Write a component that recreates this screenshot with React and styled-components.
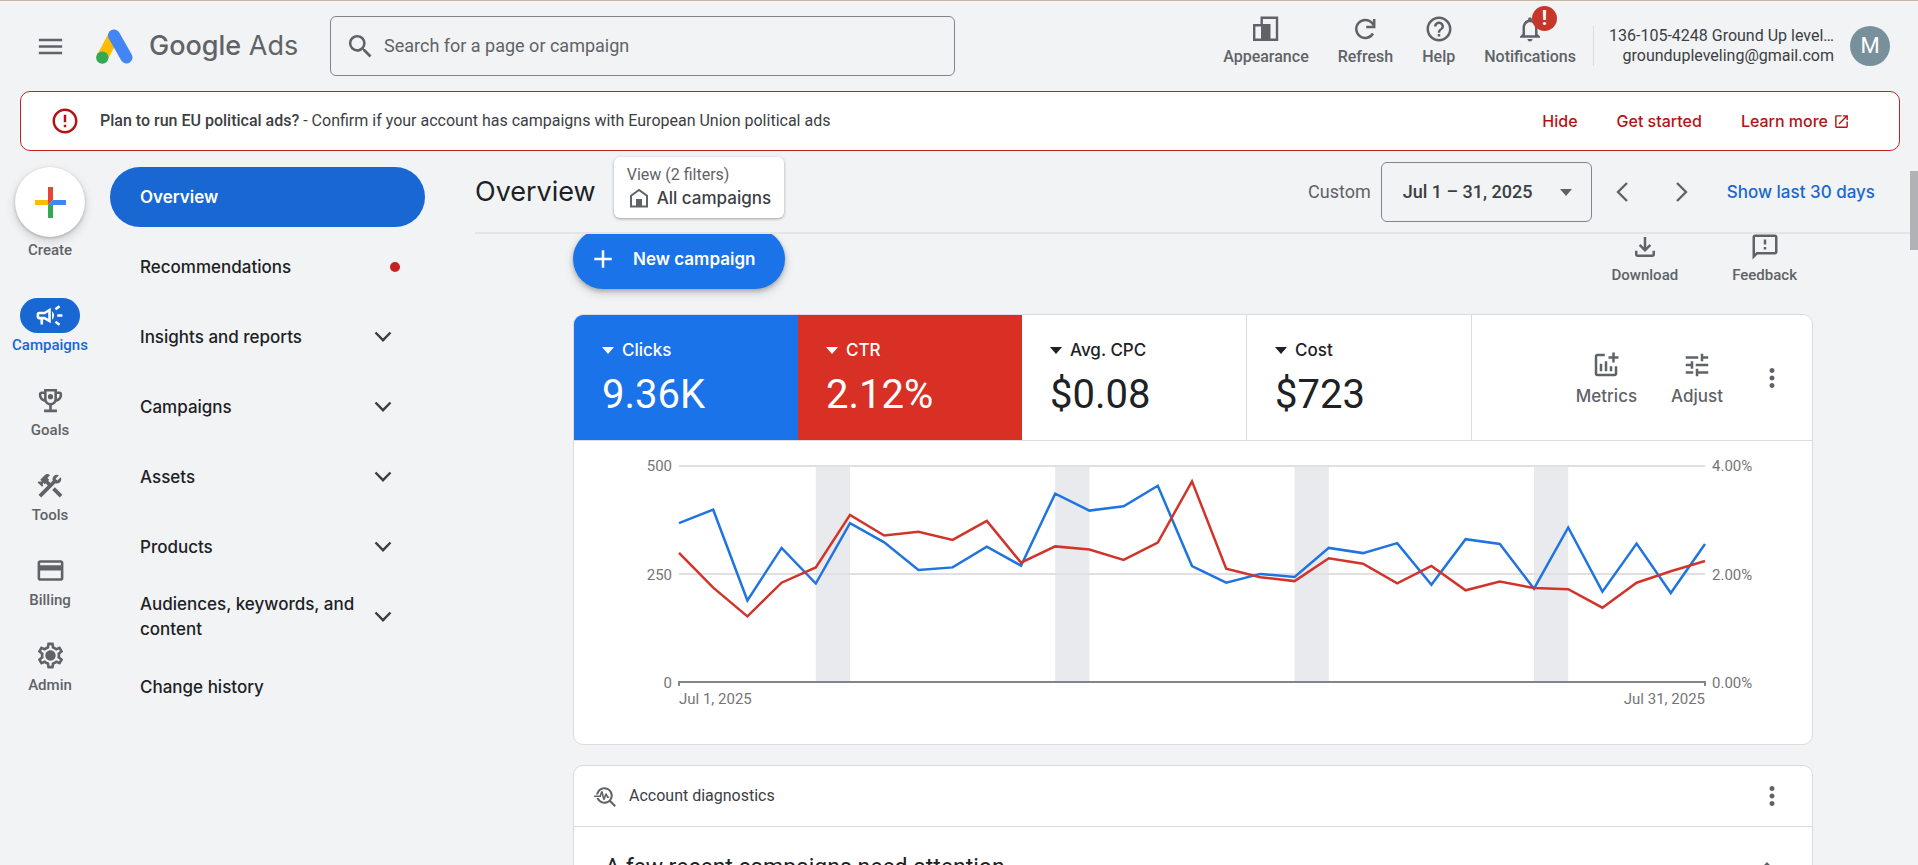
import React from "react";
import styled, { createGlobalStyle, css } from "styled-components";
import {
  MdMenu, MdSearch, MdHelpOutline, MdNotificationsNone, MdErrorOutline,
  MdOutlineCampaign, MdConstruction, MdCreditCard, MdOutlineSettings, MdOutlineEmojiEvents,
  MdTune, MdMoreVert, MdOutlineFileDownload, MdOutlineFeedback, MdOpenInNew,
  MdOutlineAddchart, MdOutlineTroubleshoot, MdAdd,
} from "react-icons/md";

const display = '"Inter", "Liberation Sans", sans-serif';
const body = '"Roboto", "Liberation Sans", sans-serif';

const color = {
  page: "#f1f3f4",
  ink: "#202124",
  text: "#3c4043",
  muted: "#5f6368",
  axis: "#80868b",
  line: "#dadce0",
  blue: "#1967d2",
  brightBlue: "#1a73e8",
  red: "#d93025",
  darkRed: "#b31412",
};

const Global = createGlobalStyle`
  *, *::before, *::after { box-sizing: border-box; }
  html, body { margin: 0; background: ${color.page}; }
  body { font-family: ${body}; color: ${color.ink}; font-size: 15px; line-height: 20px; }
  button, input, select { font: inherit; color: inherit; }
  button { border: 0; background: none; padding: 0; cursor: pointer; }
  a { color: inherit; text-decoration: none; }
  svg { display: block; flex: none; }
`;

const Page = styled.div`
  height: 100vh;
  display: flex;
  flex-direction: column;
  overflow: hidden;
  border-top: 1px solid #c9b4a8;
`;

/* ---------- top bar ---------- */

const TopBar = styled.header`
  height: 90px;
  flex: none;
  display: flex;
  align-items: center;
  padding: 0 28px 0 35px;
  color: ${color.muted};
`;

const Brand = styled.a`
  display: flex;
  align-items: center;
  gap: 16px;
  margin-left: 30px;
  font-family: ${display};
  font-size: 27px;
  line-height: 36px;
  width: 203px;
  white-space: nowrap;
`;

const BrandName = styled.span`
  b { font-weight: 500; }
`;

const SearchBox = styled.label`
  flex: 0 1 625px;
  height: 60px;
  margin-left: 31px;
  display: flex;
  align-items: center;
  gap: 8px;
  padding: 0 14px;
  border: 1px solid ${color.axis};
  border-radius: 6px;
`;

const SearchInput = styled.input`
  flex: 1;
  min-width: 0;
  border: 0;
  outline: 0;
  background: none;
  font-size: 18px;
  line-height: 24px;
  padding: 0;
  &::placeholder { color: ${color.muted}; opacity: 1; }
`;

const TopActions = styled.nav`
  margin-left: auto;
  margin-bottom: 12px;
  display: flex;
  gap: 29px;
`;

const StackButton = styled.button`
  position: relative;
  display: flex;
  flex-direction: column;
  align-items: center;
  gap: 3px;
  color: ${color.muted};
  font-weight: 500;
  font-size: 15px;
  line-height: 20px;
  ${(p) => p.$size === "top" && css`font-size: 16px;`}
  ${(p) => p.$size === "card" && css`font-size: 17px; font-family: ${display}; gap: 6px;`}
`;

const AlertBadge = styled.span`
  position: absolute;
  top: -8px;
  right: 19px;
  width: 25px;
  height: 25px;
  border-radius: 50%;
  background: #c5372a;
  color: #fff;
  font-size: 20px;
  font-weight: 700;
  line-height: 25px;
  text-align: center;
`;

const Account = styled.button`
  display: flex;
  align-items: center;
  gap: 16px;
  height: 40px;
  margin-left: 17px;
  padding-left: 15px;
  border-left: 1px solid ${color.line};
  color: ${color.text};
  font-size: 16px;
  text-align: right;
  white-space: nowrap;
`;

const Avatar = styled.span`
  width: 40px;
  height: 40px;
  border-radius: 50%;
  background: #78909c;
  color: #fff;
  font-size: 22px;
  line-height: 40px;
  text-align: center;
`;

/* ---------- banner ---------- */

const Banner = styled.section`
  flex: none;
  height: 60px;
  margin: 0 18px 0 20px;
  padding: 0 49px 0 29px;
  display: flex;
  align-items: center;
  background: #fff;
  border: 1px solid #c5221f;
  border-radius: 10px;
  color: ${color.darkRed};
`;

const BannerText = styled.p`
  margin: 0 auto 0 20px;
  font-size: 16px;
  color: ${color.text};
  b { font-weight: 500; }
`;

const BannerLinks = styled.div`
  display: flex;
  gap: 39px;
  font-family: ${display};
  font-size: 16px;
  font-weight: 500;
  a { display: flex; align-items: center; gap: 5px; }
`;

/* ---------- navigation ---------- */

const Body = styled.div`
  flex: 1;
  min-height: 0;
  display: flex;
`;

const Rail = styled.nav`
  flex: none;
  width: 100px;
  padding-top: 16px;
  display: flex;
  flex-direction: column;
  align-items: center;
`;

const CreateButton = styled.button`
  display: flex;
  flex-direction: column;
  align-items: center;
  gap: 3px;
  margin-bottom: 38px;
  color: ${color.muted};
  font-weight: 500;
`;

const CreateDisc = styled.span`
  width: 70px;
  height: 70px;
  border-radius: 50%;
  display: grid;
  place-items: center;
  background: #fff;
  box-shadow: 0 1px 3px rgba(60, 64, 67, 0.3), 0 4px 10px rgba(60, 64, 67, 0.2);
`;

const RailLink = styled.a`
  display: flex;
  flex-direction: column;
  align-items: center;
  gap: 2px;
  height: 85px;
  font-weight: 500;
  color: ${(p) => (p.$active ? color.blue : color.muted)};
`;

const RailPill = styled.span`
  width: 60px;
  height: 35px;
  border-radius: 18px;
  display: grid;
  place-items: center;
  ${(p) => p.$active && css`background: ${color.blue}; color: #fff;`}
`;

const Menu = styled.nav`
  flex: none;
  width: 335px;
  padding: 16px 10px 0;
  display: flex;
  flex-direction: column;
  gap: 10px;
`;

const MenuLink = styled.a`
  height: 60px;
  border-radius: 30px;
  padding: 0 33px 0 30px;
  display: flex;
  align-items: center;
  justify-content: space-between;
  font-family: ${display};
  font-size: 17px;
  font-weight: 500;
  line-height: 25px;
  svg { color: ${color.text}; }
  ${(p) => p.$active && css`background: ${color.blue}; color: #fff; font-weight: 600;`}
`;

const Dot = styled.span`
  width: 10px;
  height: 10px;
  margin-right: -8px;
  border-radius: 50%;
  background: #c5221f;
`;

/* ---------- main column ---------- */

const Main = styled.main`
  flex: 1;
  min-width: 0;
  margin-left: 40px;
  display: flex;
  flex-direction: column;
`;

const PageHead = styled.div`
  flex: none;
  height: 83px;
  display: flex;
  align-items: center;
  padding: 1px 35px 0 0;
  border-bottom: 2px solid #e3e5e8;
`;

const Title = styled.h1`
  margin: 0 18px 0 0;
  font-family: ${display};
  font-size: 27px;
  font-weight: 400;
  line-height: 36px;
`;

const ScopeChip = styled.button`
  display: flex;
  flex-direction: column;
  justify-content: center;
  gap: 1px;
  height: 61px;
  margin-bottom: 10px;
  padding: 0 13px;
  border-radius: 6px;
  background: #fff;
  color: ${color.muted};
  font-size: 16px;
  box-shadow: 0 1px 3px rgba(60, 64, 67, 0.45);
  text-align: left;
`;

const ScopeName = styled.span`
  display: flex;
  align-items: center;
  gap: 8px;
  font-family: ${display};
  font-size: 17px;
  font-weight: 500;
  line-height: 24px;
  color: ${color.text};
  padding-left: 2px;
  svg { color: ${color.muted}; }
`;

const RangeControls = styled.div`
  margin-left: auto;
  display: flex;
  align-items: center;
  font-size: 18px;
`;

const RangeLabel = styled.label`
  color: ${color.muted};
  margin-right: 10px;
`;

const RangeField = styled.span`
  display: flex;
  align-items: center;
  width: 211px;
  height: 60px;
  padding-right: 18px;
  border: 1px solid ${color.axis};
  border-radius: 6px;
  color: ${color.muted};
`;

const RangeSelect = styled.select`
  flex: 1;
  min-width: 0;
  height: 58px;
  padding: 0 0 0 21px;
  appearance: none;
  border: 0;
  background: none;
  font-weight: 500;
  color: ${color.text};
`;

const StepButton = styled.button`
  width: 60px;
  height: 60px;
  display: grid;
  place-items: center;
  color: ${color.muted};
`;

const TextLink = styled.a`
  margin-left: 15px;
  font-family: ${display};
  font-size: 17px;
  font-weight: 500;
  color: ${color.blue};
`;

const ScrollArea = styled.div`
  flex: 1;
  min-height: 0;
  overflow: hidden;
`;

const Content = styled.div`
  margin-top: -5px;
  padding: 0 97px 0 98px;
`;

const ActionRow = styled.div`
  height: 85px;
  display: flex;
  align-items: flex-start;
  padding-right: 16px;
`;

const NewCampaign = styled.button`
  height: 60px;
  padding: 0 30px 0 15px;
  display: flex;
  align-items: center;
  gap: 15px;
  border-radius: 30px;
  background: ${color.brightBlue};
  color: #fff;
  font-family: ${display};
  font-size: 17px;
  font-weight: 600;
  box-shadow: 0 2px 4px rgba(60, 64, 67, 0.3), 0 4px 10px rgba(60, 64, 67, 0.2);
`;

const ReportActions = styled.div`
  margin-left: auto;
  padding-top: 3px;
  display: flex;
  gap: 54px;
`;

const Card = styled.section`
  background: #fff;
  border: 1px solid ${color.line};
  border-radius: 10px;
  overflow: hidden;
  margin-bottom: 20px;
`;

const ScoreRow = styled.div`
  display: flex;
  height: 126px;
  border-bottom: 1px solid ${color.line};
`;

const ScoreTile = styled.button`
  width: ${(p) => (p.$fill ? 224 : 225)}px;
  padding: 23px 0 0 28px;
  display: flex;
  flex-direction: column;
  gap: 9px;
  text-align: left;
  background: ${(p) => p.$fill || "#fff"};
  color: ${(p) => (p.$fill ? "#fff" : color.ink)};
  border-right: ${(p) => (p.$fill ? "0" : `1px solid ${color.line}`)};
`;

const ScoreName = styled.span`
  display: flex;
  align-items: center;
  gap: 8px;
  font-family: ${display};
  font-size: 17px;
  font-weight: 500;
  line-height: 24px;
`;

const ScoreValue = styled.span`
  font-size: 40px;
  line-height: 48px;
`;

const ScoreTools = styled.div`
  margin-left: auto;
  padding-right: 25px;
  display: flex;
  align-items: center;
  gap: 34px;
`;

const ChartBox = styled.div`
  display: grid;
  grid-template-columns: 105px 1fr 100px;
  padding: 15px 7px 35px 0;
  color: #757575;
`;

const Axis = styled.div`
  height: 237px;
  display: flex;
  flex-direction: column;
  justify-content: space-between;
  padding: 0 7px;
  text-align: ${(p) => p.$align};
`;

const Plot = styled.svg`
  width: 100%;
  height: 219px;
  margin-top: 9px;
  overflow: visible;
`;

const DateRow = styled.div`
  grid-column: 2;
  display: flex;
  justify-content: space-between;
  margin-top: -4px;
`;

const CardHead = styled.header`
  height: 61px;
  display: flex;
  align-items: center;
  gap: 11px;
  padding: 0 25px 0 19px;
  border-bottom: 1px solid ${color.line};
  color: ${color.muted};
`;

const CardLabel = styled.h2`
  margin: 0 auto 0 0;
  font-size: 16px;
  font-weight: 400;
  color: ${color.text};
`;

const CardTopic = styled.div`
  display: flex;
  justify-content: space-between;
  align-items: center;
  height: 82px;
  padding: 0 36px 0 31px;
  color: ${color.muted};
`;

const TopicTitle = styled.h3`
  margin: 0;
  font-size: 23px;
  font-weight: 400;
  line-height: 30px;
  color: ${color.ink};
`;

const Gutter = styled.div`
  flex: none;
  width: 8px;
  padding-top: 20px;
`;

const Thumb = styled.div`
  height: 79px;
  background: #b0b2b5;
`;

/* ---------- drawings ---------- */

const AdsLogo = () => (
  <svg width="37" height="35" viewBox="0 0 37 35" fill="none">
    <path d="M18 6.5 6.5 28" stroke="#fbbc04" strokeWidth="11.5" strokeLinecap="round" />
    <path d="M18 6.5 30.5 28.5" stroke="#4285f4" strokeWidth="12" strokeLinecap="round" />
    <circle cx="6.3" cy="28.6" r="6.2" fill="#34a853" />
  </svg>
);

const AppearanceIcon = () => (
  <svg width="30" height="30" viewBox="0 0 30 30" fill="none" stroke="currentColor" strokeWidth="2.4">
    <path d="M10.700 10V3.700h15.300v22.100H12" />
    <path d="M3.200 11.200h8v14.600h-8z" />
    <path d="M10 10h9.500v17H10z" fill="currentColor" stroke="none" />
  </svg>
);

const RefreshIcon = () => (
  <svg width="30" height="30" viewBox="0 0 30 30" fill="none" stroke="currentColor" strokeWidth="2.5">
    <path d="M23 19.500a9 9 0 1 1-1.200-10.800L24 11.500" />
    <path d="M24.200 5v8h-8" />
  </svg>
);

const CreatePlus = () => (
  <svg width="31" height="31" viewBox="0 0 31 31">
    <path d="M13 0h5v13l-5 5z" fill="#ea4335" />
    <path d="M0 13h13v5H0z" fill="#fbbc04" />
    <path d="M18 13h13v5H13z" fill="#4285f4" />
    <path d="M13 18h5v13h-5z" fill="#34a853" />
  </svg>
);

const GoalsIcon = () => (
  <svg width="31" height="31" viewBox="0 0 24 24" fill="currentColor">
    <MdOutlineEmojiEvents size={24} />
    <circle cx="12" cy="9" r="2" />
  </svg>
);

const AdminIcon = () => (
  <svg width="31" height="31" viewBox="0 0 24 24" fill="currentColor">
    <MdOutlineSettings size={24} />
    <circle cx="12" cy="12" r="3" />
  </svg>
);

const HomeIcon = () => (
  <svg width="20" height="20" viewBox="0 0 20 20" fill="none" stroke="currentColor" strokeWidth="2">
    <path d="M2 7.800 10 2l8 5.800v10.700H2z" />
    <path d="M7 11h6v7.500H7z" fill="currentColor" stroke="none" />
  </svg>
);

const Chevron = ({ d, w, h }) => (
  <svg width={w} height={h} viewBox={`0 0 ${w} ${h}`} fill="none" stroke="currentColor" strokeWidth="2.400">
    <path d={d} />
  </svg>
);
const ChevronDown = () => <Chevron w={18} h={12} d="M1.500 1.500 9 9.200 16.500 1.500" />;
const ChevronUp = () => <Chevron w={18} h={12} d="M1.500 9.500 9 1.700 16.500 9.500" />;
const ChevronLeft = () => <Chevron w={14} h={22} d="M12 2 3 11l9 9" />;
const ChevronRight = () => <Chevron w={14} h={22} d="M2 2l9 9-9 9" />;

const Caret = ({ w = 12, h = 7 }) => (
  <svg width={w} height={h} viewBox="0 0 12 7" fill="currentColor">
    <path d="M0 0h12L6 7z" />
  </svg>
);

/* ---------- data ---------- */

const railItems = [
  { name: "Campaigns", icon: <MdOutlineCampaign size={31} />, active: true },
  { name: "Goals", icon: <GoalsIcon /> },
  { name: "Tools", icon: <MdConstruction size={30} /> },
  { name: "Billing", icon: <MdCreditCard size={31} /> },
  { name: "Admin", icon: <AdminIcon /> },
];

const menuItems = [
  { name: "Overview", active: true },
  { name: "Recommendations", dot: true },
  { name: "Insights and reports", opens: true },
  { name: "Campaigns", opens: true },
  { name: "Assets", opens: true },
  { name: "Products", opens: true },
  { name: "Audiences, keywords, and content", opens: true },
  { name: "Change history" },
];

const scores = [
  { name: "Clicks", value: "9.36K", fill: color.brightBlue },
  { name: "CTR", value: "2.12%", fill: color.red },
  { name: "Avg. CPC", value: "$0.08" },
  { name: "Cost", value: "$723" },
];

const clicks = [366, 397, 188, 309, 227, 366, 322, 258, 264, 312, 268, 434, 395, 405, 452, 267,
  229, 249, 242, 309, 297, 320, 224, 329, 318, 215, 356, 208, 319, 205, 318];
const ctr = [2.38, 1.74, 1.21, 1.83, 2.11, 3.08, 2.7, 2.77, 2.62, 2.97, 2.2, 2.5, 2.44, 2.25, 2.57,
  3.7, 2.09, 1.93, 1.86, 2.28, 2.18, 1.82, 2.14, 1.69, 1.85, 1.73, 1.71, 1.37, 1.83, 2.04, 2.23];
const weekends = [4, 11, 18, 25];

const toPoints = (values, max) =>
  values.map((v, i) => `${i * 10},${(217 * (1 - v / max)).toFixed(1)}`).join(" ");

const Chart = () => (
  <Plot viewBox="0 0 300 219" preserveAspectRatio="none" role="img" aria-label="Clicks and CTR by day">
    <g fill="#e8eaed">
      {weekends.map((d) => <rect key={d} x={d * 10} y="0" width="10" height="217" />)}
    </g>
    <g fill="none" strokeWidth="2">
      <path d="M0 1h300M0 109h300" stroke="#e0e0e0" vectorEffect="non-scaling-stroke" />
      <path d="M0 221v-4h300v4" stroke="#80868b" vectorEffect="non-scaling-stroke" />
    </g>
    <g fill="none" strokeWidth="2.5">
      <polyline points={toPoints(clicks, 500)} stroke="#1f74e0" vectorEffect="non-scaling-stroke" />
      <polyline points={toPoints(ctr, 4)} stroke="#d0342a" vectorEffect="non-scaling-stroke" />
    </g>
  </Plot>
);

export default function App() {
  return (
    <Page>
      <Global />
      <TopBar>
        <button aria-label="Main menu"><MdMenu size={31} /></button>
        <Brand href="#">
          <AdsLogo />
          <BrandName><b>Google</b> Ads</BrandName>
        </Brand>
        <SearchBox>
          <MdSearch size={31} />
          <SearchInput type="text" aria-label="Search" placeholder="Search for a page or campaign" />
        </SearchBox>
        <TopActions>
          <StackButton $size="top"><AppearanceIcon />Appearance</StackButton>
          <StackButton $size="top"><RefreshIcon />Refresh</StackButton>
          <StackButton $size="top"><MdHelpOutline size={30} />Help</StackButton>
          <StackButton $size="top">
            <MdNotificationsNone size={30} />Notifications
            <AlertBadge>!</AlertBadge>
          </StackButton>
        </TopActions>
        <Account>
          <span>136-105-4248 Ground Up level…<br />groundupleveling@gmail.com</span>
          <Avatar>M</Avatar>
        </Account>
      </TopBar>

      <Banner>
        <MdErrorOutline size={30} />
        <BannerText>
          <b>Plan to run EU political ads?</b> - Confirm if your account has campaigns with European Union political ads
        </BannerText>
        <BannerLinks>
          <a href="#">Hide</a>
          <a href="#">Get started</a>
          <a href="#">Learn more <MdOpenInNew size={17} /></a>
        </BannerLinks>
      </Banner>

      <Body>
        <Rail>
          <CreateButton>
            <CreateDisc><CreatePlus /></CreateDisc>
            Create
          </CreateButton>
          {railItems.map((r) => (
            <RailLink key={r.name} href="#" $active={r.active}>
              <RailPill $active={r.active}>{r.icon}</RailPill>
              {r.name}
            </RailLink>
          ))}
        </Rail>

        <Menu>
          {menuItems.map((m) => (
            <MenuLink key={m.name} href="#" $active={m.active}>
              {m.name}
              {m.dot && <Dot />}
              {m.opens && <ChevronDown />}
            </MenuLink>
          ))}
        </Menu>

        <Main>
          <PageHead>
            <Title>Overview</Title>
            <ScopeChip>
              View (2 filters)
              <ScopeName><HomeIcon />All campaigns</ScopeName>
            </ScopeChip>
            <RangeControls>
              <RangeLabel htmlFor="range">Custom</RangeLabel>
              <RangeField>
                <RangeSelect id="range"><option>Jul 1 – 31, 2025</option></RangeSelect>
                <Caret w={14} h={7} />
              </RangeField>
              <StepButton aria-label="Previous period"><ChevronLeft /></StepButton>
              <StepButton aria-label="Next period"><ChevronRight /></StepButton>
              <TextLink href="#">Show last 30 days</TextLink>
            </RangeControls>
          </PageHead>

          <ScrollArea>
            <Content>
              <ActionRow>
                <NewCampaign><MdAdd size={30} />New campaign</NewCampaign>
                <ReportActions>
                  <StackButton><MdOutlineFileDownload size={30} />Download</StackButton>
                  <StackButton><MdOutlineFeedback size={30} />Feedback</StackButton>
                </ReportActions>
              </ActionRow>

              <Card>
                <ScoreRow>
                  {scores.map((s) => (
                    <ScoreTile key={s.name} $fill={s.fill}>
                      <ScoreName><Caret />{s.name}</ScoreName>
                      <ScoreValue>{s.value}</ScoreValue>
                    </ScoreTile>
                  ))}
                  <ScoreTools>
                    <StackButton $size="card"><MdOutlineAddchart size={30} />Metrics</StackButton>
                    <StackButton $size="card"><MdTune size={30} />Adjust</StackButton>
                    <button aria-label="More"><MdMoreVert size={30} color={color.muted} /></button>
                  </ScoreTools>
                </ScoreRow>
                <ChartBox>
                  <Axis $align="right"><span>500</span><span>250</span><span>0</span></Axis>
                  <Chart />
                  <Axis $align="left"><span>4.00%</span><span>2.00%</span><span>0.00%</span></Axis>
                  <DateRow><span>Jul 1, 2025</span><span>Jul 31, 2025</span></DateRow>
                </ChartBox>
              </Card>

              <Card>
                <CardHead>
                  <MdOutlineTroubleshoot size={25} />
                  <CardLabel>Account diagnostics</CardLabel>
                  <button aria-label="More"><MdMoreVert size={30} color={color.muted} /></button>
                </CardHead>
                <CardTopic>
                  <TopicTitle>A few recent campaigns need attention</TopicTitle>
                  <button aria-label="Collapse"><ChevronUp /></button>
                </CardTopic>
              </Card>
            </Content>
          </ScrollArea>
        </Main>
        <Gutter><Thumb /></Gutter>
      </Body>
    </Page>
  );
}
